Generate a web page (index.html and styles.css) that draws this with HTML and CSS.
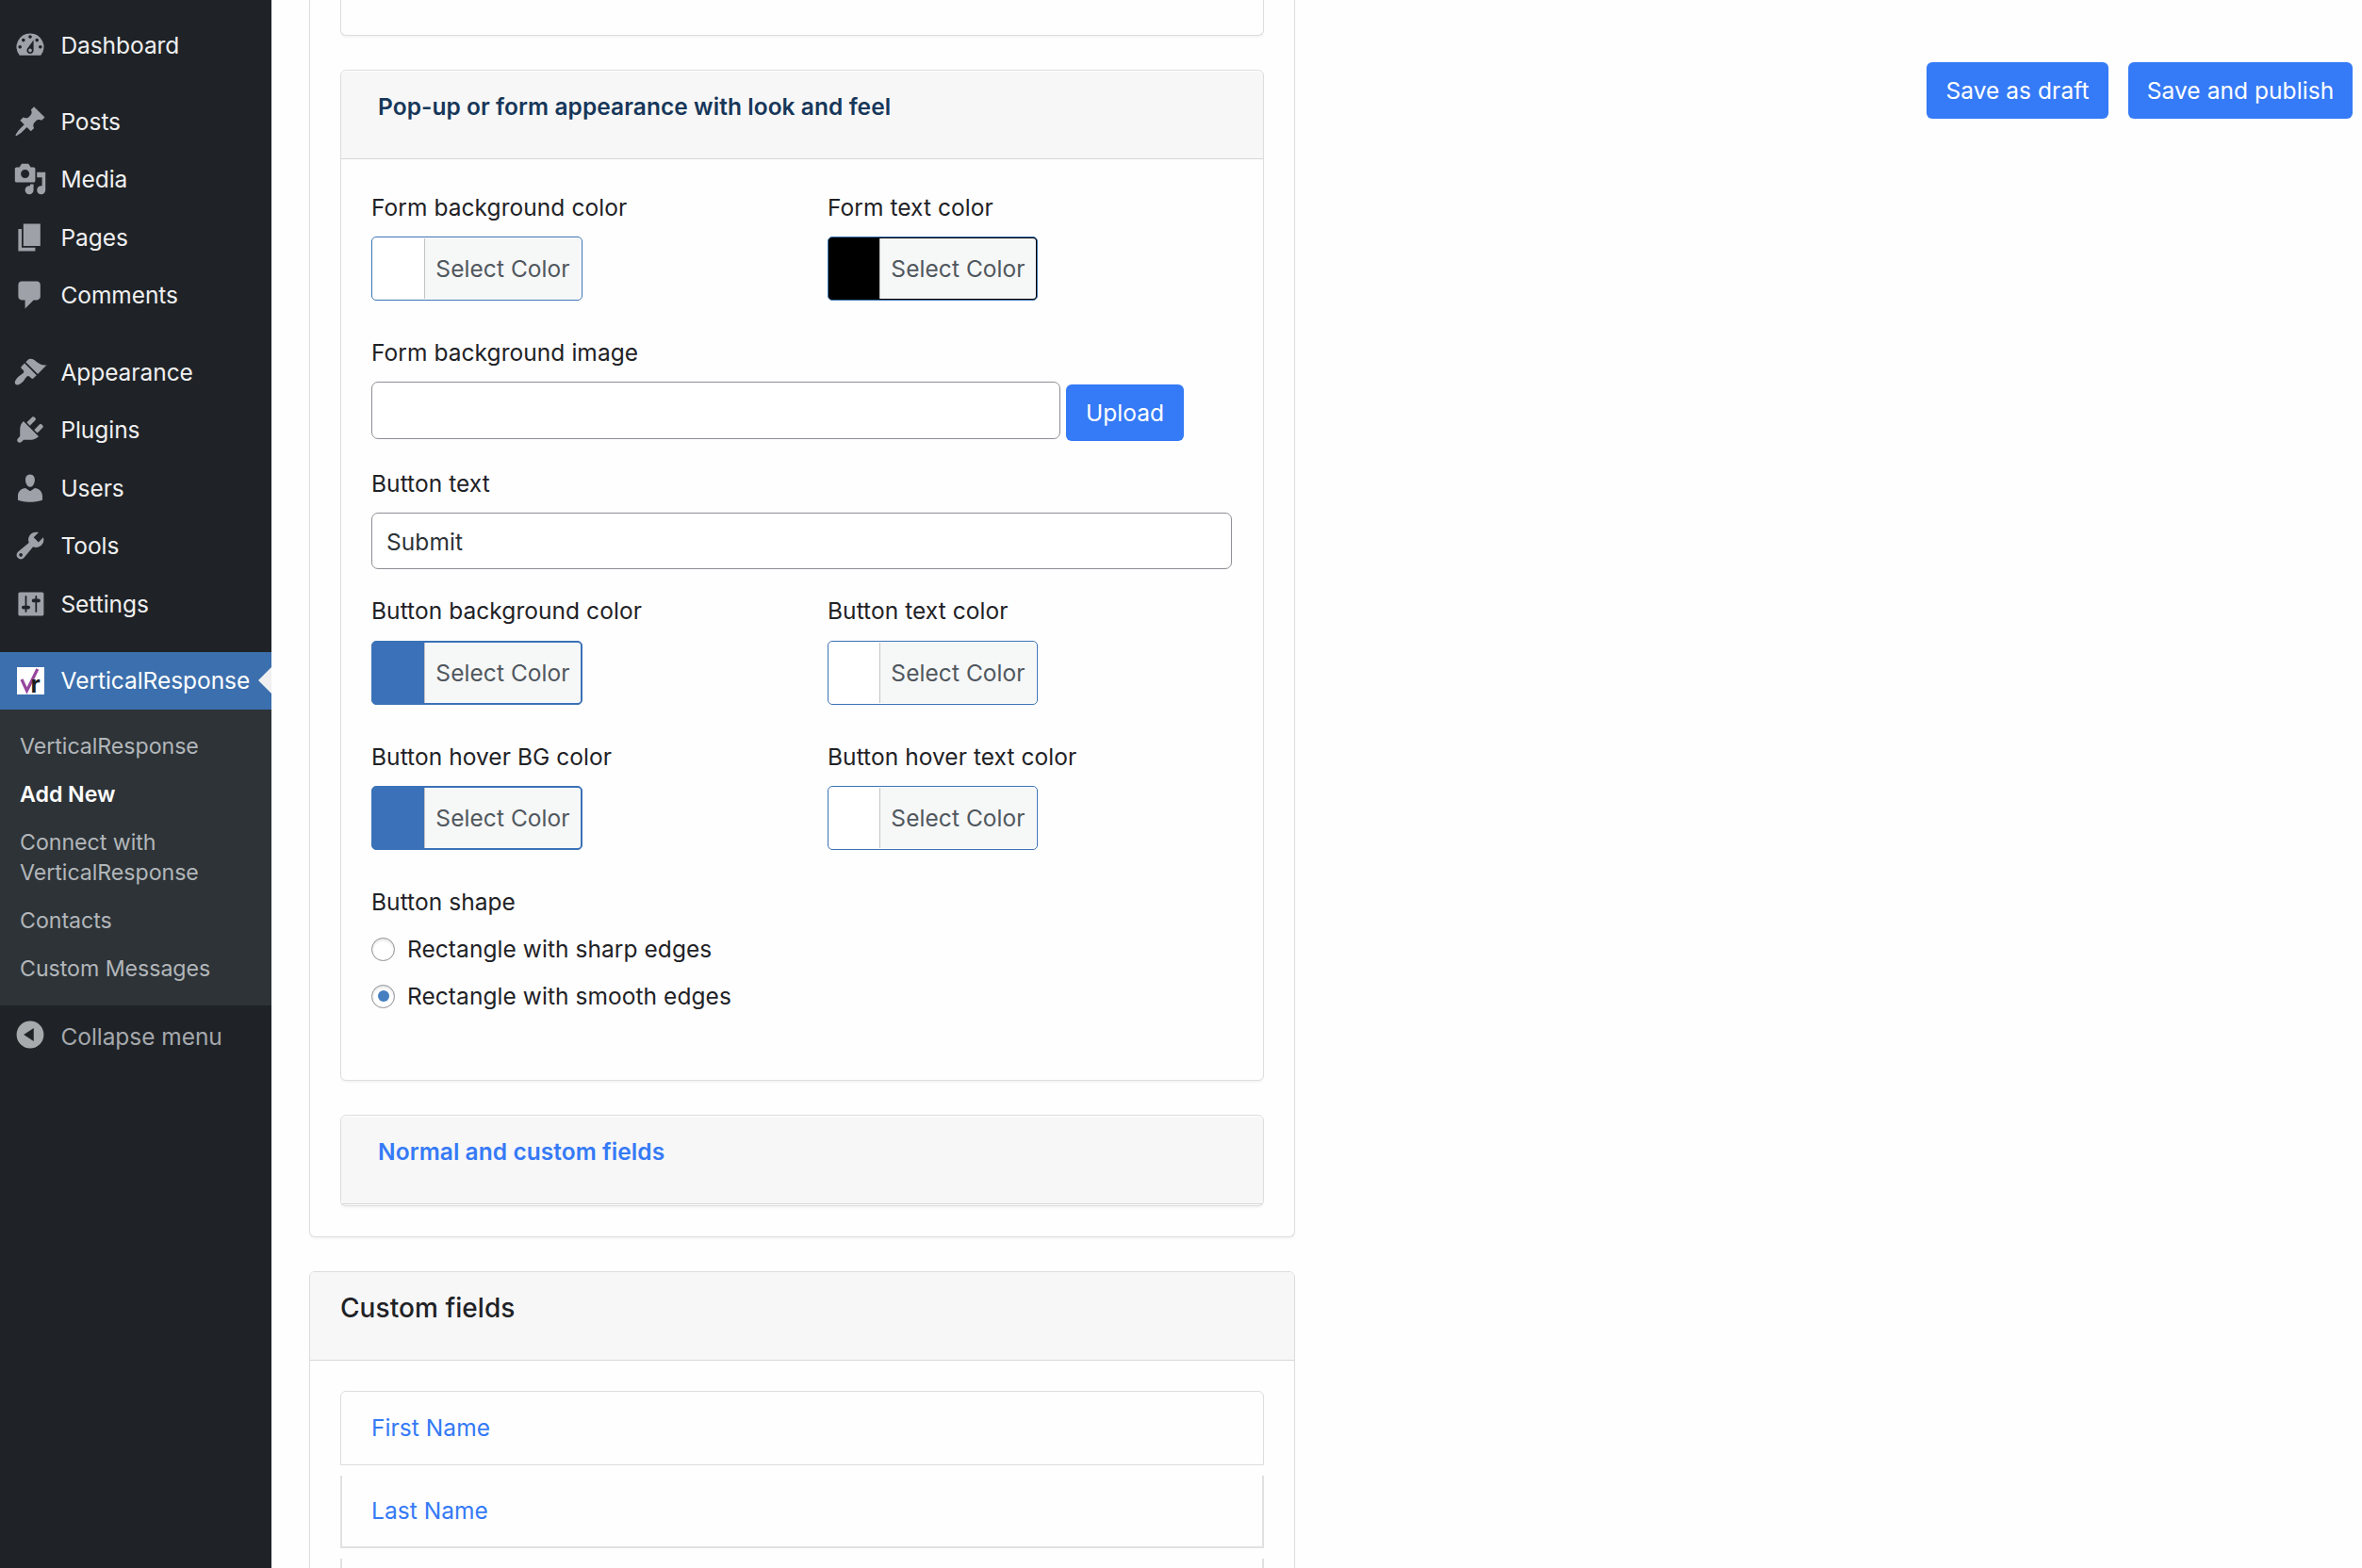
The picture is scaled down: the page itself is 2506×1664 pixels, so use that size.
FILE: index.html
```html
<!DOCTYPE html>
<html lang="en">
<head>
<meta charset="utf-8">
<title>VerticalResponse - Add New</title>
<link rel="stylesheet" href="styles.css">
</head>
<body>
<div class="app">
  <nav class="sidebar">
    <ul class="menu">
      <li class="menu-item"><svg class="icon" viewBox="0 0 20 20"><path fill-rule="evenodd" d="M3.76 16h12.48A7.998 7.998 0 0 0 10 3a7.998 7.998 0 0 0-6.24 13zM10 4c.55 0 1 .45 1 1s-.45 1-1 1-1-.45-1-1 .45-1 1-1zM6 6c.55 0 1 .45 1 1s-.45 1-1 1-1-.45-1-1 .45-1 1-1zm8 0c.55 0 1 .45 1 1s-.45 1-1 1-1-.45-1-1 .45-1 1-1zm-5.37 5.55L12 7v6c0 1.1-.9 2-2 2s-2-.9-2-2c0-.57.24-1.08.63-1.45zM4 10c.55 0 1 .45 1 1s-.45 1-1 1-1-.45-1-1 .45-1 1-1zm12 0c.55 0 1 .45 1 1s-.45 1-1 1-1-.45-1-1 .45-1 1-1zm-5 3c0-.55-.45-1-1-1s-1 .45-1 1 .45 1 1 1 1-.45 1-1z"/></svg><span>Dashboard</span></li>
      <li class="menu-item group-start"><svg class="icon" viewBox="0 0 20 20"><path d="M10.44 3.02l1.82-1.82 6.36 6.35-1.83 1.82c-1.05-.68-2.48-.57-3.41.36l-.75.75c-.92.93-1.04 2.35-.35 3.41l-1.83 1.82-2.41-2.41-2.8 2.79c-.42.42-3.38 2.71-3.8 2.29s1.86-3.39 2.28-3.81l2.79-2.79L4.1 9.36l1.83-1.82c1.05.69 2.48.57 3.4-.36l.75-.75c.93-.92 1.05-2.35.36-3.41z"/></svg><span>Posts</span></li>
      <li class="menu-item"><svg class="icon" viewBox="0 0 20 20"><path fill-rule="evenodd" d="M13 11V4c0-.55-.45-1-1-1h-1.67L9 1H5L3.67 3H2c-.55 0-1 .45-1 1v7c0 .55.45 1 1 1h10c.55 0 1-.45 1-1zM7 4.5c1.38 0 2.5 1.12 2.5 2.5S8.38 9.5 7 9.5 4.5 8.38 4.5 7 5.62 4.5 7 4.5zM14 6h5v10.5c0 1.38-1.12 2.5-2.5 2.5S14 17.88 14 16.5s1.12-2.5 2.5-2.5c.17 0 .34.02.5.05V9h-3V6zm-4 8.05V13h2v3.5c0 1.38-1.12 2.5-2.5 2.5S7 17.88 7 16.5 8.12 14 9.5 14c.17 0 .34.02.5.05z"/></svg><span>Media</span></li>
      <li class="menu-item"><svg class="icon" viewBox="0 0 20 20"><path d="M6 15V2h10v13H6zm-1 1h8v2H3V5h2v11z"/></svg><span>Pages</span></li>
      <li class="menu-item"><svg class="icon" viewBox="0 0 20 20"><path d="M5 2h9c1.1 0 2 .9 2 2v7c0 1.1-.9 2-2 2h-2l-5 5v-5H5c-1.1 0-2-.9-2-2V4c0-1.1.9-2 2-2z"/></svg><span>Comments</span></li>
      <li class="menu-item group-start"><svg class="icon" viewBox="0 0 20 20"><path d="M14.48 11.06L7.41 3.99l1.5-1.5c.5-.56 2.3-.47 3.51.32 1.21.8 1.43 1.28 2.91 2.1 1.18.64 2.45 1.26 4.45.85zm-.71.71L6.7 4.7 4.93 6.47c-.39.39-.39 1.02 0 1.41l1.06 1.06c.39.39.39 1.03 0 1.42-.6.6-1.43 1.11-2.21 1.69-.35.26-.7.53-1.01.84C1.43 14.23.4 16.08 1.4 17.07c.99 1 2.84-.03 4.18-1.36.31-.31.58-.66.85-1.02.57-.78 1.08-1.61 1.69-2.21.39-.39 1.02-.39 1.41 0l1.06 1.06c.39.39 1.02.39 1.41 0z"/></svg><span>Appearance</span></li>
      <li class="menu-item"><svg class="icon" viewBox="0 0 20 20"><path d="M13.11 4.36L9.87 7.6 8 5.73l3.24-3.24c.35-.34 1.05-.2 1.56.32.52.51.66 1.21.31 1.55zm-8 1.77l.91-1.12 9.01 9.01-1.19.84c-.71.71-2.63 1.16-3.82 1.16H6.14L4.9 17.26c-.59.59-1.54.59-2.12 0-.59-.58-.59-1.53 0-2.12l1.24-1.24v-3.88c0-1.13.4-3.19 1.09-3.89zm7.26 3.97l3.24-3.24c.34-.35 1.04-.21 1.55.31.52.51.66 1.21.31 1.55l-3.24 3.25z"/></svg><span>Plugins</span></li>
      <li class="menu-item"><svg class="icon" viewBox="0 0 20 20"><path d="M10 9.25c-2.27 0-2.73-3.44-2.73-3.44C7 4.02 7.82 2 9.97 2c2.16 0 2.98 2.02 2.71 3.81 0 0-.41 3.44-2.68 3.44zm0 2.57L12.72 10c2.39 0 4.52 2.33 4.52 4.53v2.49s-3.65 1.13-7.24 1.13c-3.65 0-7.24-1.13-7.24-1.13v-2.49c0-2.25 1.94-4.48 4.47-4.48z"/></svg><span>Users</span></li>
      <li class="menu-item"><svg class="icon" viewBox="0 0 20 20"><path fill-rule="evenodd" d="M16.68 9.77c-1.34 1.34-3.3 1.67-4.95.99l-5.41 6.52c-.99.99-2.59.99-3.58 0s-.99-2.59 0-3.57l6.52-5.42c-.68-1.65-.35-3.61.99-4.95 1.28-1.28 3.12-1.62 4.72-1.06l-2.89 2.89 2.82 2.82 2.86-2.87c.53 1.58.18 3.39-1.08 4.65zM3.81 16.21c.4.39 1.04.39 1.43 0 .4-.4.4-1.04 0-1.43-.39-.4-1.03-.4-1.43 0-.39.39-.39 1.03 0 1.43z"/></svg><span>Tools</span></li>
      <li class="menu-item"><svg class="icon" viewBox="0 0 20 20"><path fill-rule="evenodd" d="M18 16V4c0-.55-.45-1-1-1H4c-.55 0-1 .45-1 1v12c0 .55.45 1 1 1h13c.55 0 1-.45 1-1zM8 11h1c.55 0 1 .45 1 1s-.45 1-1 1H8v1.5c0 .28-.22.5-.5.5s-.5-.22-.5-.5V13H6c-.55 0-1-.45-1-1s.45-1 1-1h1V5.500c0-.28.22-.5.5-.5s.5.22.5.5V11zm5-2h-1c-.55 0-1-.45-1-1s.45-1 1-1h1V5.500c0-.28.22-.5.5-.5s.5.22.5.5V7h1c.55 0 1 .45 1 1s-.45 1-1 1h-1v5.500c0 .28-.22.5-.5.5s-.5-.22-.5-.5V9z"/></svg><span>Settings</span></li>
      <li class="menu-item group-start current"><svg class="icon logo" viewBox="0 0 29 29"><rect width="29" height="29" fill="#fff"/><path d="M5 13 10.500 25 21.800 2" fill="none" stroke="#96479c" stroke-width="3.200"/><text class="logo-r" x="14.500" y="26.500">r</text></svg><span>VerticalResponse</span></li>
    </ul>
    <ul class="submenu">
      <li>VerticalResponse</li>
      <li class="active">Add New</li>
      <li>Connect with VerticalResponse</li>
      <li>Contacts</li>
      <li>Custom Messages</li>
    </ul>
    <div class="menu-item collapse"><svg class="icon" viewBox="0 0 20 20"><path fill-rule="evenodd" d="M10 2a8 8 0 1 1 0 16 8 8 0 0 1 0-16zM12.100 6.100 6.200 10l5.900 3.900z"/></svg><span>Collapse menu</span></div>
  </nav>

  <main class="content">
    <section class="panel panel-forms">
      <div class="card card-previous"></div>
      <div class="card">
        <h3 class="card-head open">Pop-up or form appearance with look and feel</h3>
        <div class="card-body">
          <div class="row">
            <div class="field"><label>Form background color</label><button class="picker white"><i></i><span>Select Color</span></button></div>
            <div class="field"><label>Form text color</label><button class="picker black"><i></i><span>Select Color</span></button></div>
          </div>
          <div class="field field-image"><label>Form background image</label>
            <div class="upload-row"><input class="input" type="text"><button class="btn upload">Upload</button></div>
          </div>
          <div class="field field-text"><label>Button text</label><input class="input input-full" type="text" value="Submit"></div>
          <div class="row row-button">
            <div class="field"><label>Button background color</label><button class="picker blue"><i></i><span>Select Color</span></button></div>
            <div class="field"><label>Button text color</label><button class="picker white"><i></i><span>Select Color</span></button></div>
          </div>
          <div class="row row-hover">
            <div class="field"><label>Button hover BG color</label><button class="picker blue"><i></i><span>Select Color</span></button></div>
            <div class="field"><label>Button hover text color</label><button class="picker white"><i></i><span>Select Color</span></button></div>
          </div>
          <div class="field field-shape"><label>Button shape</label>
            <div class="option"><i class="radio"></i><span>Rectangle with sharp edges</span></div>
            <div class="option"><i class="radio checked"></i><span>Rectangle with smooth edges</span></div>
          </div>
        </div>
      </div>
      <div class="card card-fields"><h3 class="card-head">Normal and custom fields</h3></div>
    </section>

    <section class="panel panel-custom">
      <h2 class="panel-head">Custom fields</h2>
      <ul class="list">
        <li class="first">First Name</li>
        <li>Last Name</li>
        <li></li>
      </ul>
    </section>
  </main>

  <div class="actions">
    <button class="btn draft">Save as draft</button>
    <button class="btn publish">Save and publish</button>
  </div>
</div>
</body>
</html>
```
FILE: styles.css
```css
* { box-sizing: border-box; }
html, body { height: 100%; }
body {
  margin: 0;
  overflow: hidden;
  background: #fefefe;
  color: #1f2226;
  font-family: Inter, "Liberation Sans", sans-serif;
  font-size: 24.5px;
  letter-spacing: 0.06px;
  line-height: 38px;
}
ul, h2, h3 { margin: 0; padding: 0; list-style: none; }
button, input { font: inherit; letter-spacing: inherit; margin: 0; }
.app { display: flex; height: 1664px; overflow: hidden; }

/* Sidebar */
.sidebar { width: 288px; flex: none; background: #1f2327; padding-top: 17.5px; letter-spacing: -0.05px; }
.menu-item { display: flex; height: 61.5px; padding: 12px 0 0 14.4px; color: #f0f0f1; white-space: nowrap; line-height: 37px; }
.menu-item .icon { width: 36px; height: 36px; flex: none; margin-right: 14px; fill: #9ea2a8; }
.group-start { margin-top: 19.8px; }
.menu-item.current { position: relative; background: #3c6fad; color: #fff; }
.current::after {
  content: ""; position: absolute; right: 0; top: 16px;
  border: 14.5px solid transparent; border-left: 0; border-right: 14px solid #f0f0f1;
}
.menu-item .logo { width: 29px; height: 29px; margin: 4px 17.6px 0 3.6px; overflow: visible; }
.logo-r { font: 700 25px Inter, sans-serif; fill: #1d1d1d; }
.submenu { background: #2d3337; padding: 13px 40px 13px 21px; font-size: 23.2px; line-height: 32.4px; color: #b2b6ba; }
.submenu li { padding: 9.3px 0; }
.submenu .active { color: #fff; font-weight: 600; }
.collapse { color: #a5a8ac; height: 82px; padding-top: 13px; }
.collapse span { padding-top: 2px; }
.menu-item.collapse .icon { fill: #a7aaad; }

/* Panels */
.content { width: 1046px; flex: none; margin-left: 40px; }
.panel, .card { background: #fefefe; border: 1px solid #dcdddf; border-radius: 6px; box-shadow: 0 2px 2px rgba(0, 0, 0, .04); }
.panel-forms { height: 1313px; border-top: 0; border-radius: 0 0 6px 6px; padding: 0 32px; }
.card-previous { height: 38px; border-top: 0; border-radius: 0 0 6px 6px; }
.card { margin-bottom: 36px; }
.card-head { height: 93px; margin-top: 1px; padding: 18px 39px; background: #f7f7f7; border-bottom: 1px solid #d6d7d9; font-size: 24.5px; font-weight: 600; color: #357af6; border-radius: 5px 5px 0 0; }
.card-head.open { color: #17375a; }
.card-fields { height: 97px; }
.card-body { height: 977px; padding: 32px; }

/* Form fields */
.row { display: grid; grid-template-columns: 484px 1fr; }
.field { display: flex; flex-direction: column; align-items: flex-start; }
.field > label { display: block; height: 38px; margin-bottom: 12px; }
.picker { display: flex; width: 224px; height: 68px; padding: 1px; border: 1px solid #3c73b5; border-radius: 5px; background: #fff; color: #50575e; }
.picker i { width: 54px; height: 100%; flex: none; }
.picker span { flex: 1; height: 100%; line-height: 65px; background: #f6f7f7; border-left: 1px solid #c3c4c7; text-align: center; border-radius: 0 3px 3px 0; }
.field + .field .picker { width: 223px; }
.field + .field .picker i { width: 53px; }
.picker.black { background: #000; }
.picker.blue { background: #3a71b8; }
.field-image { margin-top: 36px; }
.upload-row { display: flex; gap: 6px; }
.input { width: 731px; height: 61px; padding: 1px 15px 0; border: 1px solid #8c8f94; border-radius: 7px; background: #fff; color: #2c3338; }
.input-full { width: 913px; height: 60px; }
.btn { height: 60px; border: 0; border-radius: 6px; padding: 0; background: #357af6; color: #fff; text-align: center; }
.upload { width: 125px; margin-top: 3px; }
.field-text { margin-top: 26px; }
.row-button { margin-top: 25px; }
.row-button label { margin-bottom: 13px; }
.row-hover { margin-top: 36px; }
.field-shape { margin-top: 36px; }
.option { display: flex; align-items: center; height: 38px; margin-bottom: 12px; gap: 13px; }
.radio { width: 25px; height: 25px; display: grid; place-items: center; border: 1px solid #8c8f94; border-radius: 50%; background: #fff; box-shadow: inset 0 2px 3px rgba(0, 0, 0, .1); }
.radio.checked::before { content: ""; width: 12px; height: 12px; border-radius: 50%; background: #457fc0; }

/* Custom fields */
.panel-custom { height: 400px; margin-top: 36px; }
.panel-head { height: 94px; padding: 19px 32px; background: #f7f7f7; border-bottom: 1px solid #d6d7d9; font-size: 28px; font-weight: 500; border-radius: 5px 5px 0 0; }
.list { padding: 32px 32px 0; color: #357af6; }
.list li { height: 77px; margin-bottom: 11px; padding: 18px 31px; border: 2px solid #e0e1e3; border-top: 0; }
.list .first { height: 79px; padding: 19px 32px; border: 1px solid #dcdddf; border-radius: 6px 6px 0 0; }

.actions { flex: 1; display: flex; justify-content: flex-end; gap: 21px; padding: 66px 10px 0 0; }
.draft { width: 193px; }
.publish { width: 238px; }
```
